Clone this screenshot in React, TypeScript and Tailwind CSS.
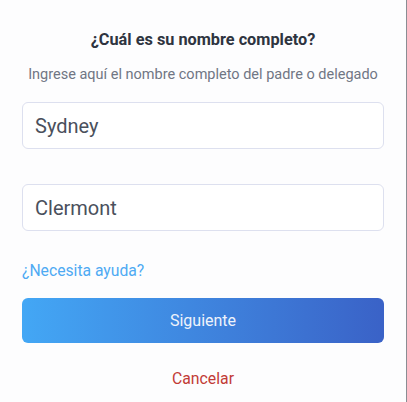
import React, { useState } from 'react';

const App: React.FC = () => {
  const [firstName, setFirstName] = useState('Sydney');
  const [lastName, setLastName] = useState('Clermont');

  return (
    <div
      className="w-[407px] h-[402px] bg-[#fdfdfe] border-r border-[#8a8d93] px-[22px] pt-[29px] flex flex-col"
      style={{ fontFamily: 'Roboto, "Liberation Sans", sans-serif' }}
    >
      <h1 className="text-center text-[16.3px] leading-[22px] font-bold text-[#2e3440]">
        ¿Cuál es su nombre completo?
      </h1>
      <p className="mt-[14px] text-center text-[14.5px] leading-5 text-[#707684]">
        Ingrese aquí el nombre completo del padre o delegado
      </p>

      <input
        type="text"
        value={firstName}
        onChange={(e) => setFirstName(e.target.value)}
        className="mt-[17px] h-[47px] w-full rounded-md border border-[#dde0ef] bg-white px-[12px] text-[20px] text-[#4a505c] focus:outline-none"
      />
      <input
        type="text"
        value={lastName}
        onChange={(e) => setLastName(e.target.value)}
        className="mt-[35px] h-[47px] w-full rounded-md border border-[#dde0ef] bg-white px-[12px] text-[20px] text-[#4a505c] focus:outline-none"
      />

      <a href="#" className="mt-[29px] self-start text-[15.7px] leading-[22px] text-[#4eaaf3]">
        ¿Necesita ayuda?
      </a>

      <button
        type="button"
        className="mt-[16px] h-[45px] w-full rounded-md bg-gradient-to-r from-[#43a7f5] to-[#3a62c7] text-[16px] text-[#eef3fb]"
      >
        Siguiente
      </button>

      <button type="button" className="mt-[25px] self-center text-[15.8px] leading-[22px] text-[#c23b36]">
        Cancelar
      </button>
    </div>
  );
};

export default App;
